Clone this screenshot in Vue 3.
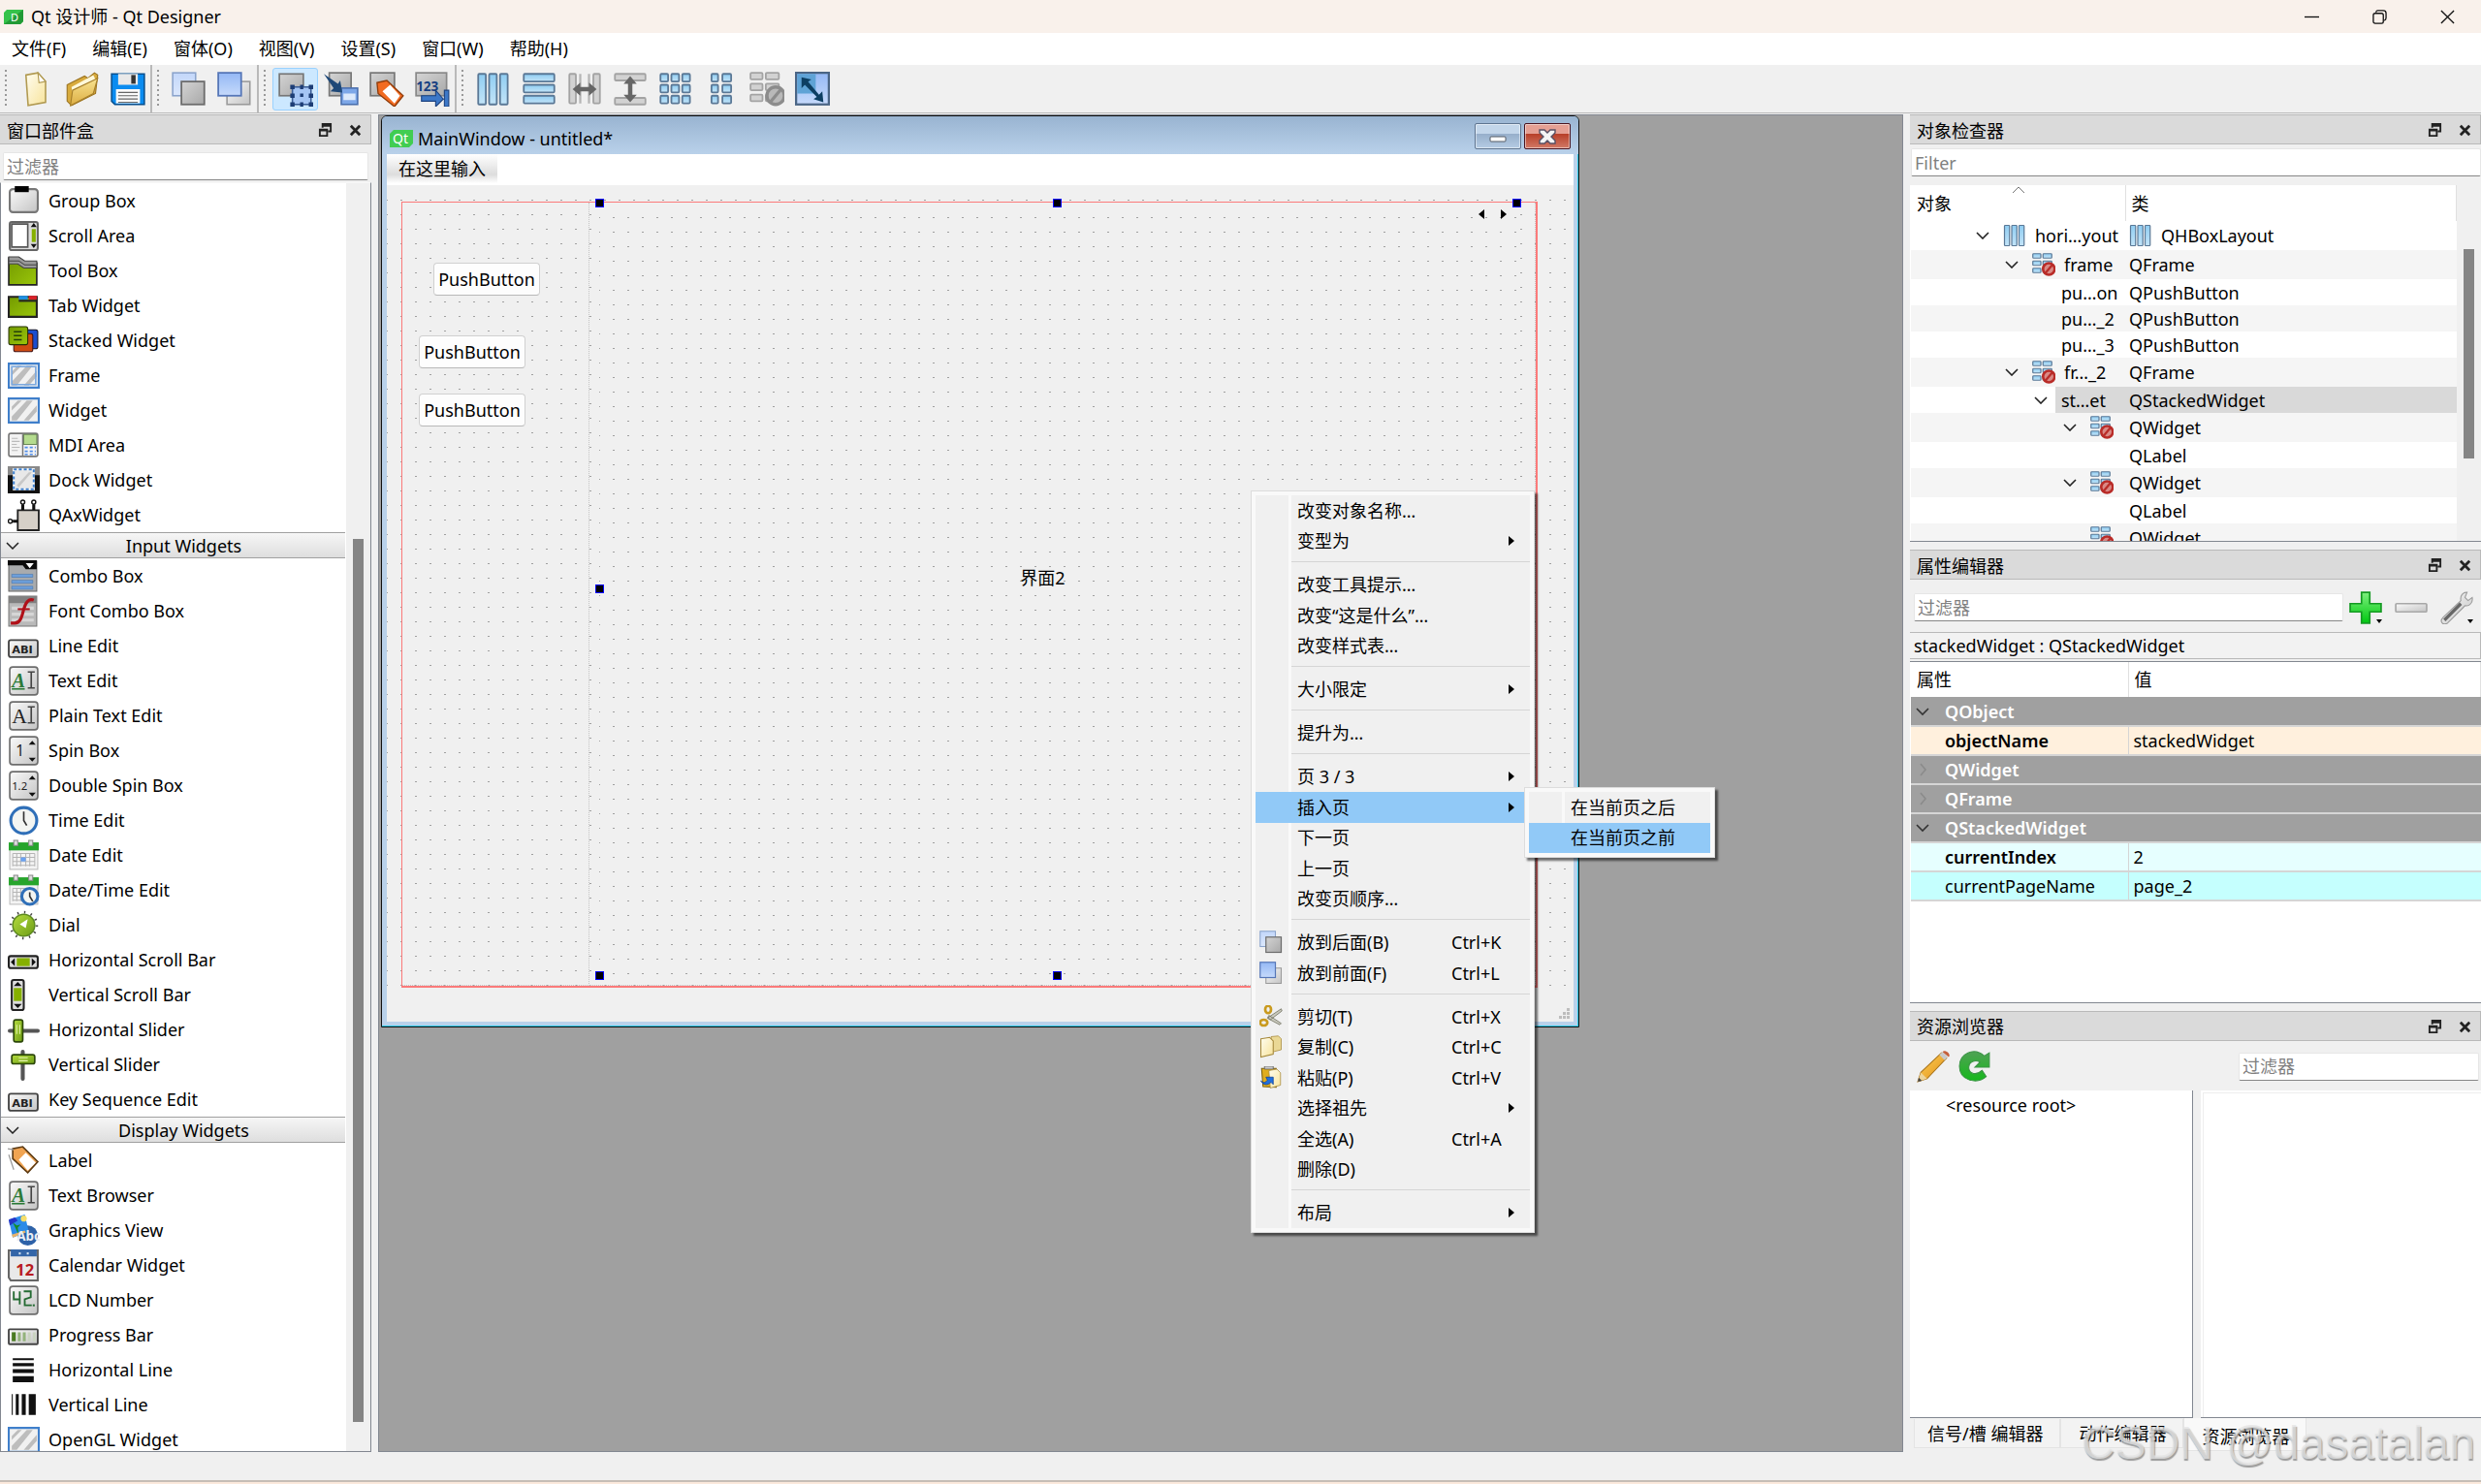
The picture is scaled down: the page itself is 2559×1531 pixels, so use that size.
<script setup>
const menus = ['文件(F)', '编辑(E)', '窗体(O)', '视图(V)', '设置(S)', '窗口(W)', '帮助(H)']

const panel = '<rect x="2" y="2" width="28" height="28" rx="3" fill="url(#silver)" stroke="#6d6d6d" stroke-width="1.6"/>'
const glass = (x, y, w, h) =>
  `<rect x="${x}" y="${y}" width="${w}" height="${h}" rx="1" fill="url(#ice)" stroke="#5a7896" stroke-width="1.6"/>`
const grey = (x, y, w, h) =>
  `<rect x="${x}" y="${y}" width="${w}" height="${h}" rx="1" fill="#d2d2d2" stroke="#a3a3a3" stroke-width="1.6"/>`
const abi = '<rect x="1" y="10" width="29" height="17" rx="2" fill="url(#silver)" stroke="#444" stroke-width="1.8"/><text x="4" y="23" font-family="DejaVu Sans" font-weight="bold" font-size="11" fill="#222">ABI</text>'
const stripes = '<path d="M4 22L19 6h6L9 26H4zM16 26L29 11v6l-8 9zM4 12l6-6h4L4 16z" fill="#bdbdbd"/>'
const calendar = '<rect x="2" y="4" width="28" height="26" fill="#f4f4f4" stroke="#bbb"/><path d="M1 3h30v8H1z" fill="#27a52c"/><path d="M6 1h4v5H6zM21 1h4v5h-4z" fill="#ddd" stroke="#888"/><path d="M5 14h22M5 18h22M5 22h22M5 26h22M5 14v13M9 14v13M13 14v13M18 14v13M22 14v13M27 14v13" stroke="#b5b5b5" stroke-width="1"/>'
const clock = (cx, cy, r) =>
  `<circle cx="${cx}" cy="${cy}" r="${r}" fill="#f3f5f2" stroke="#2f6fb8" stroke-width="3"/><path d="M${cx} ${cy - r + 4}V${cy}l3 5" fill="none" stroke="#333" stroke-width="1.6"/>`
const sendBack = '<rect x="1" y="1" width="21" height="21" fill="url(#pale)" stroke="#8ba4cc" stroke-width="1.4"/><rect x="9" y="9" width="21" height="21" fill="url(#steel)" stroke="#6c6c6c" stroke-width="1.6"/>'
const bringFront = '<rect x="9" y="9" width="21" height="21" fill="url(#silver)" stroke="#9a9a9a" stroke-width="1.4"/><rect x="1" y="1" width="21" height="21" fill="url(#blue)" stroke="#5677b8" stroke-width="1.6"/>'
const columns = glass(2, 2, 7, 28) + glass(12, 2, 7, 28) + glass(22, 2, 7, 28)

const icons = {
  file: '<path d="M6 3l11-2 7 8v19L8 31z" fill="url(#cream)" stroke="#b19a51" stroke-width="1.4"/><path d="M17 1l7 8-6 1z" fill="#fff" stroke="#b19a51"/>',
  open: '<path d="M2 12L18 4l3 2 6-5 3 2-2 17L6 31 2 27z" fill="#d8ab3d" stroke="#9c7420"/><path d="M6 14L26 3l2 4-21 13z" fill="#fff8da"/><path d="M7 17L30 6l-4 14L5 31z" fill="url(#folder)" stroke="#a67f2a"/>',
  save: '<path d="M1 2h30v28H4l-3-3z" fill="#0b8cf0" stroke="#08508f" stroke-width="1.4"/><path d="M7 2h18v10H7z" fill="#e9e9e9"/><path d="M19 3h4v8h-4z" fill="#333"/><path d="M5 16h22v13H5z" fill="#fafafa"/><path d="M7 19h18M7 22h18M7 25h18M7 28h18" stroke="#666"/>',
  sendBack, bringFront,
  editWidgets: '<rect x="1" y="2" width="22" height="20" fill="url(#steel)" stroke="#777" stroke-width="1.5"/><rect x="13" y="14" width="17" height="16" fill="#a5c5f4" stroke="#3c5e96" stroke-width="1.4"/><path d="M11 12h4v4h-4zM20 12h3v4h-3zM28 12h4v4h-4zM11 20h4v4h-4zM28 20h4v4h-4zM11 28h4v4h-4zM20 28h3v4h-3zM28 28h4v4h-4zM20 20h3v3h-3z" fill="#1d3d75"/>',
  editSignals: '<rect x="5" y="1" width="20" height="21" fill="url(#steel)" stroke="#777" stroke-width="1.5"/><rect x="16" y="15" width="15" height="15" fill="#7da7e8" stroke="#4a6fae" stroke-width="1.4"/><path d="M18 20h11v6H18z" fill="#dce9fb"/><path d="M0 2l13 9 2-3 2 11-11-1 3-3z" fill="#1f4877"/>',
  editBuddies: '<rect x="1" y="1" width="22" height="21" fill="url(#steel)" stroke="#777" stroke-width="1.5"/><path d="M7 10l9-2 15 14-8 10L8 20z" fill="#f26b21" stroke="#8f3c0b" stroke-width="1.2"/><path d="M12 18l7-6 9 10-5 7z" fill="#fff"/>',
  editTabs: '<rect x="1" y="1" width="28" height="21" fill="url(#steel)" stroke="#888" stroke-width="1.5"/><text x="1" y="18" font-family="Noto Sans" font-weight="bold" font-size="12" fill="#173f82">123</text><path d="M6 22h13v-5l7 8-7 7v-5H6zM27 17h4v15h-4z" fill="#3d78c8" stroke="#1d4380"/>',
  layoutH: columns,
  layoutV: glass(2, 2, 28, 7) + glass(2, 12, 28, 7) + glass(2, 22, 28, 7),
  splitH: grey(2, 2, 6, 27) + grey(24, 2, 6, 27) + '<path d="M12 2v27M20 2v27" stroke="#b5b5b5" stroke-width="2"/><path d="M5 16l7-6v4h8v-4l7 6-7 6v-4h-8v4z" fill="#666"/>',
  splitV: grey(2, 2, 28, 6) + grey(2, 24, 28, 6) + '<path d="M16 4l6 7h-4v10h4l-6 7-6-7h4V11h-4z" fill="#666"/>',
  grid: [2, 12, 22].map(y => [2, 12, 22].map(x => glass(x, y, 7, 7)).join('')).join(''),
  form: [2, 12, 22].map(y => glass(7, y, 6, 7) + glass(17, y, 8, 7)).join(''),
  breakOff: [1, 11, 21].map(y => grey(1, y, 11, 6) + grey(15, y, 12, 6)).join('') + '<circle cx="24" cy="22" r="8" fill="#b9b9b9" stroke="#8c8c8c" stroke-width="3"/><path d="M19 28l10-12" stroke="#8c8c8c" stroke-width="3"/>',
  adjust: '<rect x="1" y="1" width="30" height="29" fill="url(#blue)" stroke="#4a6585" stroke-width="2"/><path d="M2 2h17v18H2z" fill="#5fa3d6"/><path d="M6 5l9 2-3 2 10 12 3-3 1 10-9-3 3-2L9 12l-3 3z" fill="#0d3f63"/>',
  broken: [1, 11, 21].map(y => glass(1, y, 11, 6) + glass(15, y, 12, 6)).join('') + '<circle cx="23" cy="22" r="8" fill="#d98a86" stroke="#b92c28" stroke-width="3.4"/><path d="M18 28l10-12" stroke="#b92c28" stroke-width="3"/>',

  groupBox: '<rect x="2" y="4" width="28" height="23" rx="3" fill="url(#silver)" stroke="#777" stroke-width="2"/><path d="M7 1h14v6H7z" fill="#000"/>',
  scrollArea: '<rect x="2" y="2" width="28" height="28" rx="2" fill="#ddd" stroke="#666" stroke-width="2"/><path d="M4 4h16v23H4z" fill="#fff" stroke="#555" stroke-width="1.6"/><path d="M24 9h4v13h-4z" fill="#86b000"/><path d="M26 3l3 4h-6zM26 28l3-4h-6z" fill="#111"/>',
  toolBox: '<path d="M1 3h10l6 5h12v22H1z" fill="url(#green)" stroke="#222" stroke-width="1.6"/><path d="M1 2h10l6 4h12v7H16l-6-4H1z" fill="#9a9a9a" stroke="#444"/><path d="M1 6h10l6 4h12" fill="none" stroke="#444"/>',
  tabWidget: '<path d="M1 7h28v20H1z" fill="url(#green)" stroke="#222" stroke-width="2"/><path d="M11 6h9v4h-9z" fill="#1f8fe0"/><path d="M21 6h8v4h-8z" fill="#d9222a"/><path d="M11 11h18" stroke="#222" stroke-width="2"/>',
  stacked: '<rect x="16" y="5" width="14" height="19" rx="2" fill="#1a4ed0" stroke="#112"/><rect x="6" y="9" width="19" height="18" rx="2" fill="#cf4a12" stroke="#411"/><rect x="1" y="2" width="19" height="18" rx="2" fill="url(#green)" stroke="#253005"/><path d="M6 7h8M6 11h8M6 15h8" stroke="#25400a" stroke-width="1.4"/>',
  frame: '<path d="M1 4h30v24H1z" fill="#f1f1f1" stroke="#3f7fcb" stroke-width="2"/>' + stripes + '<path d="M4 7h24v18H4z" fill="none" stroke="#7aa8df" stroke-width="1.6"/>',
  widget: '<path d="M1 4h30v24H1z" fill="#f1f1f1" stroke="#3f7fcb" stroke-width="2"/>' + stripes,
  mdi: '<rect x="1" y="4" width="29" height="23" rx="2" fill="#f2f2f2" stroke="#777" stroke-width="1.6"/><path d="M16 5h13v10H16z" fill="#b4db8e" stroke="#6b8a55"/><path d="M15 5v22" stroke="#777" stroke-width="1.4"/><path d="M4 9h6M4 12h8M4 15h5M4 18h8M4 21h6" stroke="#bbb"/><path d="M17 18h11M17 22h11M17 25h11" stroke="#4f8ce8" stroke-width="1.6" stroke-dasharray="3 2"/>',
  dock: '<path d="M0 2h32v27H0z" fill="#111"/><path d="M0 2h32v9H0z" fill="#8a8a8a"/><rect x="6" y="5" width="20" height="20" fill="#e8e8e8" stroke="#fff" stroke-width="2"/><rect x="6" y="5" width="20" height="20" fill="none" stroke="#3f7fcb" stroke-width="2" stroke-dasharray="3 2"/><path d="M9 21L21 8h3L11 23z" fill="#c7c7c7"/>',
  qax: '<path d="M10 11h21v20H10z" fill="#d6d0c8" stroke="#222" stroke-width="1.8"/><path d="M15 5v6M26 5v6M5 22h5" stroke="#111" stroke-width="3"/><circle cx="15" cy="3" r="2" fill="#fff" stroke="#111" stroke-width="1.4"/><circle cx="26" cy="3" r="2" fill="#fff" stroke="#111" stroke-width="1.4"/><circle cx="2.5" cy="22" r="2" fill="#fff" stroke="#111" stroke-width="1.4"/>',
  combo: '<path d="M1 1h28v30H1z" fill="#a9abad" stroke="#666"/><path d="M0 0h29v9H18l-3-4H0z" fill="#0a0a0a"/><path d="M18 3h8l-4 5z" fill="#fff"/><path d="M4 14h21v3H4zM4 20h21v3H4zM4 26h21v3H4z" fill="#6d9fdb" stroke="#4a78b0" stroke-width=".6"/>',
  fontCombo: '<path d="M1 1h28v30H1z" fill="#b9b9b9" stroke="#777"/><path d="M1 1h28v7H1z" fill="#808080"/><path d="M4 13h22M4 19h22M4 25h22" stroke="#d6d6d6" stroke-width="3"/><path d="M26 5c-5-2-8 2-10 9-2 9-4 14-9 14l-4 0" fill="none" stroke="#b01018" stroke-width="3"/><path d="M10 14h12" stroke="#b01018" stroke-width="2"/>',
  abi,
  textEdit: panel + '<text x="4" y="22" font-family="Liberation Serif" font-style="italic" font-weight="bold" font-size="20" fill="#2c7a38">A</text><path d="M4 24h13" stroke="#2c7a38" stroke-width="1.6"/><path d="M20 7h7M23.500 7v16M20 23h7" stroke="#444" stroke-width="1.6"/>',
  plain: panel + '<text x="4" y="23" font-family="Liberation Serif" font-size="21" fill="#222">A</text><path d="M20 7h7M23.500 7v16M20 23h7" stroke="#444" stroke-width="1.6"/>',
  spin: panel + '<text x="8" y="21" font-family="Noto Sans" font-size="15" fill="#222">1</text><path d="M21 10l3.500-4 3.500 4zM21 23l3.500 4 3.500-4z" fill="#111"/>',
  double: panel + '<text x="4" y="20" font-family="Noto Sans" font-size="11" fill="#222">1.2</text><path d="M21 10l3.500-4 3.500 4zM21 23l3.500 4 3.500-4z" fill="#111"/>',
  time: clock(16, 16, 13),
  date: calendar + '<path d="M13 18h5v4h-5z" fill="#6aa2f2"/>',
  dateTime: calendar + clock(22, 22, 8),
  dial: '<circle cx="16" cy="16" r="13" fill="none" stroke="#444" stroke-width="2.600" stroke-dasharray="1.400 5.400"/><circle cx="16" cy="16" r="11" fill="url(#lime)" stroke="#5d8a20" stroke-width="1.4"/><path d="M20 10l-2 9-6-4z" fill="#fff"/>',
  hScroll: '<rect x="1" y="12" width="29" height="12" rx="2" fill="#ddd" stroke="#222" stroke-width="2"/><path d="M9 14h13v8H9z" fill="#86b000"/><path d="M7 14v8l-4-4zM24 14v8l4-4z" fill="#111"/>',
  vScroll: '<rect x="4" y="1" width="12" height="30" rx="2" fill="#ddd" stroke="#222" stroke-width="2"/><path d="M6 9h8v13H6z" fill="#86b000"/><path d="M6 7h8l-4-4zM6 25h8l-4 4z" fill="#111"/>',
  hSlider: '<path d="M2 17h28" stroke="#555" stroke-width="4" stroke-linecap="round"/><rect x="6" y="6" width="9" height="22" rx="2" fill="url(#lime)" stroke="#2c4708" stroke-width="1.6"/><path d="M9 11v9M12 11v9" stroke="#e5f5b0"/>',
  vSlider: '<path d="M15 3v27" stroke="#555" stroke-width="4" stroke-linecap="round"/><rect x="4" y="6" width="23" height="9" rx="2" fill="url(#lime)" stroke="#2c4708" stroke-width="1.6"/><path d="M11 9h9M11 12h9" stroke="#e5f5b0"/>',
  label: '<path d="M5 4l10-2 15 15-10 11L5 14z" fill="#f0a452" stroke="#5e3c15" stroke-width="1.6"/><path d="M11 15l7-7 10 10-8 8z" fill="#fff"/><path d="M0 4l6 1M1 10l5 15" fill="none" stroke="#999" stroke-width="1.2"/>',
  graphics: '<circle cx="20" cy="21" r="10" fill="#2e62a8"/><path d="M1 5l16-5 4 17-16 6z" fill="#2c8be8"/><path d="M1 5l6-2 3 3-8 5z" fill="#2634c8"/><circle cx="16" cy="4" r="3" fill="#f5de6a"/><path d="M5 8l4 3 4-1-3 3 1 8-3-7z" fill="#138a28"/><path d="M4 20l13-4 1 2-13 5z" fill="#e7b36a"/><text x="9" y="26" font-family="Noto Sans" font-size="13" font-weight="bold" fill="#e9eef5">Abc</text>',
  calendar: '<path d="M1 1h29v30H3l-2-3z" fill="#e9e9e9" stroke="#666" stroke-width="2"/><path d="M3 0h26v7H3z" fill="#3466a8"/><path d="M11 3h2v2h-2zM19 3h2v2h-2z" fill="#cde"/><text x="8" y="26" font-family="Noto Sans" font-weight="bold" font-size="16" fill="#b81c22">12</text>',
  lcd: panel + '<path d="M6 7v8h6M12 7v13M16 7h7v6l-6 2v6h7" fill="none" stroke="#256b33" stroke-width="1.8"/><path d="M25 20h2v2h-2z" fill="#256b33"/>',
  progress: '<rect x="1" y="10" width="29" height="15" rx="1" fill="url(#silver)" stroke="#444" stroke-width="1.8"/><path d="M4 13h4v9H4z" fill="#4a7a22"/><path d="M10 13h3v9h-3zM15 13h3v9h-3z" fill="#94b37c"/><path d="M20 13h3v9h-3zM25 13h3v9h-3z" fill="#c9d3c0"/>',
  hLine: '<path d="M5 4h21v2H5zM5 9h21v3H5zM5 15h21v4H5zM5 22h21v6H5z" fill="#111"/>',
  vLine: '<path d="M4 5h1v21H4zM8 5h3v21H8zM14 5h4v21h-4zM21 5h7v21h-7z" fill="#111"/>',

  cut: '<path d="M12 17L30 5l1 3-16 12zM13 14l17 11-2 2-17-9z" fill="#c9c9bd" stroke="#6b6b5a"/><ellipse cx="12" cy="6" rx="4" ry="5" fill="none" stroke="#c99a1e" stroke-width="3.600"/><ellipse cx="6" cy="24" rx="5" ry="4" fill="none" stroke="#c99a1e" stroke-width="3.600"/>',
  copy: '<path d="M16 2l10-1 4 4v15l-12 3z" fill="#ead895" stroke="#a5883a"/><path d="M2 5l12-2 5 5v18L2 30z" fill="url(#cream)" stroke="#a5883a" stroke-width="1.4"/>',
  paste: '<path d="M3 3h20v26l-18-1z" fill="#e0ad1e" stroke="#7a5f10" stroke-width="1.4"/><path d="M7 0h12v4H7z" fill="#ccc" stroke="#555"/><path d="M13 6l11-2 5 5v17l-14 4z" fill="url(#cream)" stroke="#a5883a"/><path d="M2 20c4 4 7 2 9-1l-2-4h10v10l-3-3c-5 5-11 4-14-2z" fill="#1f6fe0" stroke="#0f3f90"/>',
  plus: '<path d="M12 1h8v11h11v8H20v11h-8V20H1v-8h11z" fill="url(#plusGreen)" stroke="#149a22" stroke-width="1.6"/>',
  minus: '<rect x="1" y="12" width="30" height="8" rx="1" fill="url(#silver)" stroke="#a8a8a8" stroke-width="1.6"/>',
  wrench: '<path d="M2 31c-2-2-1-4 1-6L20 9c-1-5 2-8 6-8l-2 5 3 3 4-3c1 5-3 9-7 8L7 31c-2 1-4 1-5 0z" fill="url(#silver)" stroke="#999"/><path d="M4 28L20 12" stroke="#666" stroke-width="3"/>',
  pencil: '<path d="M1 31l3-9L24 3l5 5L10 28z" fill="url(#gold)" stroke="#a9741a"/><path d="M1 31l3-9 6 6z" fill="#ecd49c"/><path d="M1 31l1-4 3 3z" fill="#444"/><path d="M22 5l3-3 5 5-3 3z" fill="#c9c9c9"/><path d="M25 2c2-3 9 2 6 5z" fill="#c4603c"/>',
  reload: '<path d="M30 3v14H16l5-5c-5-3-11 0-11 5 0 7 8 8 13 3l4 6C18 34 1 30 1 16 1 4 15-3 25 6z" fill="url(#reloadGreen)" stroke="#3a9444"/>',
}

const toolGroups = [
  [['file', '新建'], ['open', '打开'], ['save', '保存']],
  [['sendBack', '放到后面'], ['bringFront', '放到前面']],
  [['editWidgets', '编辑控件'], ['editSignals', '编辑信号/槽'], ['editBuddies', '编辑伙伴'], ['editTabs', '编辑 Tab 顺序']],
  [['layoutH', '水平布局'], ['layoutV', '垂直布局'], ['splitH', '水平分裂器'], ['splitV', '垂直分裂器'], ['grid', '栅格布局'], ['form', '表单布局'], ['breakOff', '打破布局'], ['adjust', '调整大小']],
]

const widgetSections = [
  {
    title: '',
    items: [['groupBox', 'Group Box'], ['scrollArea', 'Scroll Area'], ['toolBox', 'Tool Box'], ['tabWidget', 'Tab Widget'], ['stacked', 'Stacked Widget'], ['frame', 'Frame'], ['widget', 'Widget'], ['mdi', 'MDI Area'], ['dock', 'Dock Widget'], ['qax', 'QAxWidget']],
  },
  {
    title: 'Input Widgets',
    items: [['combo', 'Combo Box'], ['fontCombo', 'Font Combo Box'], ['abi', 'Line Edit'], ['textEdit', 'Text Edit'], ['plain', 'Plain Text Edit'], ['spin', 'Spin Box'], ['double', 'Double Spin Box'], ['time', 'Time Edit'], ['date', 'Date Edit'], ['dateTime', 'Date/Time Edit'], ['dial', 'Dial'], ['hScroll', 'Horizontal Scroll Bar'], ['vScroll', 'Vertical Scroll Bar'], ['hSlider', 'Horizontal Slider'], ['vSlider', 'Vertical Slider'], ['abi', 'Key Sequence Edit']],
  },
  {
    title: 'Display Widgets',
    items: [['label', 'Label'], ['textEdit', 'Text Browser'], ['graphics', 'Graphics View'], ['calendar', 'Calendar Widget'], ['lcd', 'LCD Number'], ['progress', 'Progress Bar'], ['hLine', 'Horizontal Line'], ['vLine', 'Vertical Line'], ['widget', 'OpenGL Widget']],
  },
]

const objects = [
  { level: 0, open: true, icon: 'layoutH', name: 'hori…yout', cls: 'QHBoxLayout', clsIcon: 'layoutH', tall: true },
  { level: 1, open: true, icon: 'broken', name: 'frame', cls: 'QFrame', tall: true },
  { level: 2, name: 'pu…on', cls: 'QPushButton' },
  { level: 2, name: 'pu…_2', cls: 'QPushButton' },
  { level: 2, name: 'pu…_3', cls: 'QPushButton' },
  { level: 1, open: true, icon: 'broken', name: 'fr…_2', cls: 'QFrame', tall: true },
  { level: 2, open: true, name: 'st…et', cls: 'QStackedWidget', selected: true },
  { level: 3, open: true, icon: 'broken', name: '', cls: 'QWidget', tall: true },
  { level: 4, name: '', cls: 'QLabel' },
  { level: 3, open: true, icon: 'broken', name: '', cls: 'QWidget', tall: true },
  { level: 4, name: '', cls: 'QLabel' },
  { level: 3, icon: 'broken', name: '', cls: 'QWidget', tall: true },
]

const properties = [
  { group: 'QObject', open: true },
  { name: 'objectName', value: 'stackedWidget', bold: true, tone: 'peach' },
  { group: 'QWidget' },
  { group: 'QFrame' },
  { group: 'QStackedWidget', open: true },
  { name: 'currentIndex', value: '2', bold: true, tone: 'cyan' },
  { name: 'currentPageName', value: 'page_2', tone: 'aqua' },
]

const menuItems = [
  { text: '改变对象名称…' },
  { text: '变型为', sub: true },
  { sep: true },
  { text: '改变工具提示…' },
  { text: '改变“这是什么”…' },
  { text: '改变样式表…' },
  { sep: true },
  { text: '大小限定', sub: true },
  { sep: true },
  { text: '提升为…' },
  { sep: true },
  { text: '页 3 / 3', sub: true },
  { text: '插入页', sub: true, children: ['在当前页之后', '在当前页之前'] },
  { text: '下一页' },
  { text: '上一页' },
  { text: '改变页顺序…' },
  { sep: true },
  { text: '放到后面(B)', key: 'Ctrl+K', icon: 'sendBack' },
  { text: '放到前面(F)', key: 'Ctrl+L', icon: 'bringFront' },
  { sep: true },
  { text: '剪切(T)', key: 'Ctrl+X', icon: 'cut' },
  { text: '复制(C)', key: 'Ctrl+C', icon: 'copy' },
  { text: '粘贴(P)', key: 'Ctrl+V', icon: 'paste' },
  { text: '选择祖先', sub: true },
  { text: '全选(A)', key: 'Ctrl+A' },
  { text: '删除(D)' },
  { sep: true },
  { text: '布局', sub: true },
]

const handles = ['tl', 'tm', 'tr', 'ml', 'bl', 'bm']
const floatIcon = '<path d="M5 5V1h9v8h-3" fill="none" stroke="#222" stroke-width="2"/><path d="M5 3h9" stroke="#222" stroke-width="2"/><path d="M2 7h8v7H2zM2 8h8" fill="none" stroke="#222" stroke-width="2"/>'
const closeIcon = '<path d="M3 3l10 10M13 3L3 13" stroke="#222" stroke-width="3"/>'
</script>

<template>
  <div class="app">
    <svg class="defs" width="0" height="0" aria-hidden="true">
      <defs>
        <linearGradient id="silver" x1="0" y1="0" x2="1" y2="1"><stop offset="0" stop-color="#fafafa" /><stop offset="1" stop-color="#c4c4c4" /></linearGradient>
        <linearGradient id="steel" x1="0" y1="0" x2="1" y2="1"><stop offset="0" stop-color="#d4d4d4" /><stop offset="1" stop-color="#a8a8a8" /></linearGradient>
        <linearGradient id="ice" x1="0" y1="0" x2="0" y2="1"><stop offset="0" stop-color="#8fcdf2" /><stop offset="1" stop-color="#c3e4f8" /></linearGradient>
        <linearGradient id="pale" x1="0" y1="0" x2="0" y2="1"><stop offset="0" stop-color="#c3d7fa" /><stop offset="1" stop-color="#dbe7fc" /></linearGradient>
        <linearGradient id="blue" x1="0" y1="0" x2="0" y2="1"><stop offset="0" stop-color="#94b8f5" /><stop offset="1" stop-color="#c6dafb" /></linearGradient>
        <linearGradient id="cream" x1="0" y1="0" x2="1" y2="1"><stop offset="0" stop-color="#fffdf0" /><stop offset="1" stop-color="#f7e39b" /></linearGradient>
        <linearGradient id="folder" x1="0" y1="0" x2="0" y2="1"><stop offset="0" stop-color="#f9e391" /><stop offset="1" stop-color="#dcae43" /></linearGradient>
        <linearGradient id="green" x1="0" y1="0" x2="1" y2="1"><stop offset="0" stop-color="#739a00" /><stop offset="1" stop-color="#9ac60a" /></linearGradient>
        <linearGradient id="lime" x1="0" y1="0" x2="1" y2="1"><stop offset="0" stop-color="#b5dd3e" /><stop offset="1" stop-color="#6d9c16" /></linearGradient>
        <linearGradient id="gold" x1="0" y1="0" x2="1" y2="1"><stop offset="0" stop-color="#ffd257" /><stop offset="1" stop-color="#e08f18" /></linearGradient>
        <linearGradient id="plusGreen" x1="0" y1="0" x2="0" y2="1"><stop offset="0" stop-color="#7df07e" /><stop offset="1" stop-color="#00c810" /></linearGradient>
        <linearGradient id="reloadGreen" x1="0" y1="0" x2="0" y2="1"><stop offset="0" stop-color="#4fa254" /><stop offset="1" stop-color="#16b81c" /></linearGradient>
      </defs>
    </svg>

    <header class="titlebar">
      <svg class="app-logo" viewBox="0 0 20 15"><path d="M3 0h17v12l-3 3H0V3z" fill="#35c24a" /><path d="M0 15L20 0v12l-3 3z" fill="#229a36" /><text x="7" y="12" font-family="Noto Sans" font-size="11" fill="#fff">D</text></svg>
      <h1>Qt 设计师 - Qt Designer</h1>
      <div class="window-buttons">
        <button aria-label="最小化"><svg viewBox="0 0 16 16"><path d="M0 8h16" /></svg></button>
        <button aria-label="还原"><svg viewBox="0 0 16 16"><rect x="1" y="4" width="11" height="11" rx="2" /><path d="M4 3q0-2 2-2h6q3 0 3 3v5q0 2-2 3" /></svg></button>
        <button aria-label="关闭"><svg viewBox="0 0 16 16"><path d="M1 1l14 14M15 1L1 15" /></svg></button>
      </div>
    </header>

    <nav class="menubar">
      <button v-for="m in menus" :key="m">{{ m }}</button>
    </nav>

    <div class="toolbars">
      <div v-for="(group, i) in toolGroups" :key="i" class="toolbar">
        <span class="grip"></span>
        <button v-for="[icon, label] in group" :key="icon" class="tool" :class="{ active: icon === 'editWidgets' }" :aria-label="label">
          <svg viewBox="0 0 32 32" v-html="icons[icon]"></svg>
        </button>
      </div>
    </div>

    <main class="body">
      <aside class="widget-box">
        <div class="dock-title">
          <h2>窗口部件盒</h2>
          <button aria-label="浮动"><svg viewBox="0 0 16 16" v-html="floatIcon"></svg></button>
          <button aria-label="关闭"><svg viewBox="0 0 16 16" v-html="closeIcon"></svg></button>
        </div>
        <input class="filter box-filter" type="text" placeholder="过滤器" aria-label="过滤器" />
        <div class="widget-list">
          <div class="widget-items">
            <section v-for="s in widgetSections" :key="s.title">
              <button v-if="s.title" class="category">
                <svg viewBox="0 0 14 8"><path d="M1 1l6 6 6-6" /></svg>
                <span>{{ s.title }}</span>
              </button>
              <ul>
                <li v-for="[icon, label] in s.items" :key="label">
                  <svg viewBox="0 0 32 32" v-html="icons[icon]"></svg>{{ label }}
                </li>
              </ul>
            </section>
          </div>
          <div class="scroll-lane"><div class="thumb box-thumb"></div></div>
        </div>
      </aside>

      <section class="workspace">
        <article class="form-window">
          <header class="form-title">
            <svg class="qt-logo" viewBox="0 0 24 18"><path d="M4 0h20v14l-4 4H0V4z" fill="#41cd52" /><text x="3" y="14" font-family="Noto Sans" font-size="14" fill="#fff">Qt</text></svg>
            <h2>MainWindow - untitled*</h2>
            <button class="win-min" aria-label="最小化"><svg viewBox="0 0 20 16"><rect x="2" y="8" width="16" height="5" rx="1" fill="#fdfdfd" stroke="#555c66" /></svg></button>
            <button class="win-close" aria-label="关闭"><svg viewBox="0 0 20 16"><path d="M2 1h5l3 3 3-3h5v3l-4 4 4 4v3h-5l-3-3-3 3H2v-3l4-4-4-4z" fill="#f4f4f4" stroke="#585064" stroke-width="1.400" /></svg></button>
          </header>
          <div class="form-menu"><button>在这里输入</button></div>
          <div class="canvas">
            <div class="h-layout">
              <div class="frame-left">
                <button class="push first">PushButton</button>
                <button class="push second">PushButton</button>
                <button class="push third">PushButton</button>
              </div>
              <div class="frame-right">
                <div class="stack">
                  <span class="page-label">界面2</span>
                  <button class="page-arrow prev" aria-label="上一页"></button>
                  <button class="page-arrow next" aria-label="下一页"></button>
                  <i v-for="h in handles" :key="h" class="handle" :class="h"></i>
                </div>
              </div>
            </div>
          </div>
          <div class="form-status">
            <svg viewBox="0 0 12 12"><path d="M9 0h3v3H9zM5 4h3v3H5zM9 4h3v3H9zM1 8h3v3H1zM5 8h3v3H5zM9 8h3v3H9z" fill="#bdbdbd" /></svg>
          </div>
        </article>

        <div class="menu context" role="menu">
          <template v-for="(m, i) in menuItems" :key="i">
            <hr v-if="m.sep" />
            <div v-else class="menu-row" :class="{ hot: m.children }">
              <button class="menu-item" role="menuitem">
                <span class="menu-icon"><svg v-if="m.icon" viewBox="0 0 32 32" v-html="icons[m.icon]"></svg></span>
                <span class="menu-text">{{ m.text }}</span>
                <span v-if="m.key" class="menu-key">{{ m.key }}</span>
                <svg v-if="m.sub" class="menu-arrow" viewBox="0 0 6 10"><path d="M0 0l6 5-6 5z" /></svg>
              </button>
              <div v-if="m.children" class="menu submenu" role="menu">
                <div v-for="(c, j) in m.children" :key="c" class="menu-row" :class="{ hot: j === 1 }">
                  <button class="menu-item" role="menuitem">
                    <span class="menu-icon"></span><span class="menu-text">{{ c }}</span>
                  </button>
                </div>
              </div>
            </div>
          </template>
        </div>
      </section>

      <aside class="right-docks">
        <section class="dock inspector">
          <div class="dock-title">
            <h2>对象检查器</h2>
            <button aria-label="浮动"><svg viewBox="0 0 16 16" v-html="floatIcon"></svg></button>
            <button aria-label="关闭"><svg viewBox="0 0 16 16" v-html="closeIcon"></svg></button>
          </div>
          <input class="filter" type="text" placeholder="Filter" aria-label="Filter" />
          <div class="tree">
            <table>
              <thead>
                <tr>
                  <th class="name-col">对象<svg class="sort" viewBox="0 0 12 7"><path d="M0 7l6-6 6 6" /></svg></th>
                  <th>类</th>
                </tr>
              </thead>
              <tbody>
                <tr v-for="(o, i) in objects" :key="i" :class="{ tall: o.tall }">
                  <td>
                    <div class="node">
                      <span v-for="n in o.level" :key="n" class="indent"></span>
                      <span class="twist"><svg v-if="o.open" viewBox="0 0 14 8"><path d="M1 1l6 6 6-6" /></svg></span>
                      <span class="node-name" :class="{ selected: o.selected }">
                        <svg v-if="o.icon" viewBox="0 0 32 32" v-html="icons[o.icon]"></svg>{{ o.name }}
                      </span>
                    </div>
                  </td>
                  <td :class="{ selected: o.selected }">
                    <div class="node cls"><svg v-if="o.clsIcon" viewBox="0 0 32 32" v-html="icons[o.clsIcon]"></svg>{{ o.cls }}</div>
                  </td>
                </tr>
              </tbody>
            </table>
            <div class="scroll-lane"><div class="thumb tree-thumb"></div></div>
          </div>
        </section>

        <section class="dock editor">
          <div class="dock-title">
            <h2>属性编辑器</h2>
            <button aria-label="浮动"><svg viewBox="0 0 16 16" v-html="floatIcon"></svg></button>
            <button aria-label="关闭"><svg viewBox="0 0 16 16" v-html="closeIcon"></svg></button>
          </div>
          <div class="editor-tools">
            <input class="filter" type="text" placeholder="过滤器" aria-label="过滤属性" />
            <button class="drop" aria-label="添加"><svg viewBox="0 0 32 32" v-html="icons.plus"></svg></button>
            <button aria-label="移除"><svg viewBox="0 0 32 32" v-html="icons.minus"></svg></button>
            <button class="drop" aria-label="设置"><svg viewBox="0 0 32 32" v-html="icons.wrench"></svg></button>
          </div>
          <p class="object-label">stackedWidget : QStackedWidget</p>
          <div class="props">
            <table>
              <thead>
                <tr><th class="prop-col">属性</th><th>值</th></tr>
              </thead>
              <tbody>
                <tr v-for="p in properties" :key="p.group || p.name" :class="p.group ? 'group' : p.tone">
                  <template v-if="p.group">
                    <td colspan="2">
                      <svg v-if="p.open" viewBox="0 0 14 14"><path d="M1 4l6 6 6-6" stroke="#333" /></svg>
                      <svg v-else viewBox="0 0 14 14"><path d="M5 1l5 6-5 6" stroke="#8b8b8b" /></svg>
                      {{ p.group }}
                    </td>
                  </template>
                  <template v-else>
                    <td class="prop-name" :class="{ bold: p.bold }">{{ p.name }}</td>
                    <td class="prop-value">{{ p.value }}</td>
                  </template>
                </tr>
              </tbody>
            </table>
          </div>
        </section>

        <section class="dock resources">
          <div class="dock-title">
            <h2>资源浏览器</h2>
            <button aria-label="浮动"><svg viewBox="0 0 16 16" v-html="floatIcon"></svg></button>
            <button aria-label="关闭"><svg viewBox="0 0 16 16" v-html="closeIcon"></svg></button>
          </div>
          <div class="resource-tools">
            <button aria-label="编辑资源"><svg viewBox="0 0 32 32" v-html="icons.pencil"></svg></button>
            <button aria-label="重新加载"><svg viewBox="0 0 32 32" v-html="icons.reload"></svg></button>
            <input class="filter" type="text" placeholder="过滤器" aria-label="过滤资源" />
          </div>
          <div class="resource-panes">
            <div class="pane root-pane">&lt;resource root&gt;</div>
            <div class="pane file-pane"></div>
          </div>
          <div class="tabs">
            <button>信号/槽 编辑器</button>
            <button>动作编辑器</button>
            <button class="current">资源浏览器</button>
          </div>
        </section>
      </aside>
    </main>

    <footer class="statusbar"></footer>
    <div class="watermark">CSDN @dasatalan</div>
  </div>
</template>

<style>
body {
  margin: 0;
}
</style>

<style scoped>
.app {
  position: relative;
  display: flex;
  flex-direction: column;
  height: 100vh;
  overflow: hidden;
  background: #f0f0f0;
  color: #000;
  font: 18px/24px 'Noto Sans', 'Noto Sans CJK SC', sans-serif;
}
.app * {
  box-sizing: border-box;
}
.defs {
  position: absolute;
}
button,
input {
  font: inherit;
  color: inherit;
  border: 0;
  padding: 0;
  background: none;
}
h1,
h2,
p,
ul {
  margin: 0;
  padding: 0;
  font-size: 18px;
  font-weight: 400;
  list-style: none;
}
svg {
  display: block;
  flex: none;
}

.titlebar {
  flex: none;
  display: flex;
  align-items: center;
  height: 34px;
  padding-left: 4px;
  background: #f9f1eb;
}
.titlebar h1 {
  flex: 1;
  margin-left: 8px;
}
.app-logo {
  width: 20px;
  height: 15px;
}
.window-buttons {
  display: flex;
}
.window-buttons button {
  display: flex;
  align-items: center;
  justify-content: center;
  width: 70px;
  height: 34px;
}
.window-buttons svg {
  width: 15px;
  height: 15px;
  fill: none;
  stroke: #111;
  stroke-width: 1.4;
}

.menubar {
  flex: none;
  display: flex;
  gap: 3px;
  height: 33px;
  padding-bottom: 1px;
  background: #fff;
}
.menubar button {
  padding: 0 12px;
}

.toolbars {
  flex: none;
  display: flex;
  height: 50px;
  border-bottom: 1px solid #b9b9b9;
}
.toolbar {
  display: flex;
  align-items: center;
  padding-left: 5px;
  border-right: 2px solid #b9b9b9;
}
.toolbar:last-child {
  border-right: 0;
}
.grip {
  width: 9px;
  height: 40px;
  background: linear-gradient(90deg, transparent 2px, #f0f0f0 2px), repeating-linear-gradient(180deg, #999 0 2px, #f0f0f0 2px 5px);
}
.tool {
  display: flex;
  align-items: center;
  justify-content: center;
  width: 47px;
  height: 44px;
}
.tool.active {
  background: #cce8ff;
  border: 1px solid #99d1ff;
  border-radius: 3px;
}
.tool svg {
  width: 36px;
  height: 36px;
}

.body {
  flex: 1;
  min-height: 0;
  display: flex;
  gap: 7px;
  padding-top: 1px;
}
.widget-box {
  flex: none;
  width: 383px;
  display: flex;
  flex-direction: column;
}
.dock-title {
  flex: none;
  display: flex;
  align-items: center;
  height: 31px;
  padding: 2px 7px 0 7px;
  background: #dadada;
  border: 1px solid #b9b9b9;
  border-left: 0;
}
.dock-title h2 {
  flex: 1;
}
.dock-title button {
  width: 16px;
  margin-left: 15px;
}
.dock-title svg {
  width: 15px;
  height: 15px;
}
.filter {
  flex: none;
  height: 29px;
  padding: 0 3px;
  background: #fff;
  border: 1px solid #e6e6e6;
  border-bottom: 1px solid #868686;
  border-radius: 2px;
}
.filter::placeholder {
  color: #808080;
  opacity: 1;
}
.box-filter {
  margin: 8px 3px 2px 3px;
}
.widget-list {
  flex: 1;
  min-height: 0;
  display: flex;
  background: #fff;
  border: 1px solid #828790;
  border-top-color: #f8f8f8;
}
.widget-items {
  flex: 1;
  overflow: hidden;
}
.scroll-lane {
  flex: none;
  width: 25px;
  padding-left: 7px;
  background: #f0f0f0;
}
.thumb {
  width: 11px;
  background: #858585;
}
.box-thumb {
  height: 911px;
  margin-top: 367px;
}
.widget-items li {
  display: flex;
  align-items: center;
  height: 36px;
  padding-left: 7px;
  gap: 9px;
}
.widget-items li svg {
  width: 33px;
  height: 33px;
}
.category {
  display: flex;
  align-items: center;
  width: 355px;
  height: 27px;
  background: linear-gradient(#f6f6f6, #dedede);
  border-top: 1px solid #a0a0a0;
  border-bottom: 1px solid #a0a0a0;
}
.category svg {
  width: 14px;
  height: 8px;
  margin-left: 5px;
  fill: none;
  stroke: #222;
  stroke-width: 1.5;
}
.category span {
  flex: 1;
  padding-left: 3px;
}

.workspace {
  position: relative;
  flex: 1;
  overflow: hidden;
  background: #a0a0a0;
  border: 1px solid #828790;
}
.form-window {
  position: absolute;
  left: 2px;
  top: 0;
  width: 1236px;
  padding: 0 5px 5px;
  background: #b9d1ea;
  border: 1px solid #111;
  border-radius: 6px 6px 0 0;
  box-shadow: inset -1px -1px #2bc9e6;
}
.form-title {
  display: flex;
  align-items: center;
  height: 39px;
  margin: 0 -5px;
  padding: 6px 8px 0 8px;
  background: linear-gradient(#99b4d1, #b9d1ea);
  border-radius: 5px 5px 0 0;
}
.form-title h2 {
  flex: 1;
  margin-left: 5px;
}
.qt-logo {
  width: 24px;
  height: 18px;
}
.form-title button {
  display: flex;
  align-items: center;
  justify-content: center;
  width: 48px;
  height: 27px;
  margin: 0 0 4px 3px;
  border: 1px solid #5f7590;
  border-radius: 2px;
  box-shadow: inset 0 0 0 1px rgba(255, 255, 255, 0.5);
}
.form-title svg {
  height: 16px;
}
.form-title .qt-logo {
  height: 18px;
}
.win-min {
  background: linear-gradient(#c3d6ea 40%, #97afcb 42%, #b5cce4);
}
.form-title .win-close {
  border-color: #4a1420;
  background: linear-gradient(#e5a094 40%, #b8402a 42%, #d27a66);
}
.form-menu {
  height: 32px;
  background: #fff;
}
.form-menu button {
  height: 30px;
  padding: 0 12px;
  background: linear-gradient(#fff, #ddd 70%, #fff);
}
.canvas {
  height: 828px;
  padding: 17px 37px 0 15px;
  background: linear-gradient(#f0f0f0, #f0f0f0) 0 0 / 100% 15px no-repeat,
    repeating-linear-gradient(90deg, transparent 0 1px, #f0f0f0 1px 14px, transparent 14px 15px),
    repeating-linear-gradient(180deg, #a0a0a0 0 1px, #f0f0f0 1px 15px);
}
.h-layout {
  display: flex;
  height: 811px;
  border: 1px solid #fb7a7a;
  border-width: 1px 2px 2px 1px;
}
.frame-left {
  position: relative;
  width: 193px;
  border-right: 1px dotted #c4c4c4;
  border-bottom: 1px dotted #c4c4c4;
}
.push {
  position: absolute;
  width: 110px;
  height: 34px;
  background: #fdfdfd;
  border: 1px solid #d0d0d0;
  border-bottom-color: #b8b8b8;
  border-radius: 4px;
}
.first {
  left: 32px;
  top: 62px;
}
.second {
  left: 17px;
  top: 137px;
}
.third {
  left: 17px;
  top: 197px;
}
.frame-right {
  flex: 1;
  padding: 1px 18px 10px 10px;
  border-right: 1px dotted #c4c4c4;
  border-bottom: 1px dotted #c4c4c4;
}
.stack {
  position: relative;
  display: flex;
  align-items: center;
  justify-content: center;
  height: 100%;
  background: repeating-linear-gradient(90deg, transparent 0 1px, #f0f0f0 1px 14px, transparent 14px 15px),
    repeating-linear-gradient(180deg, #f0f0f0 0 14px, #a0a0a0 14px 15px);
}
.page-label {
  padding: 0 32px 24px 0;
}
.page-arrow {
  position: absolute;
  top: 6px;
  border: 5px solid transparent;
}
.prev {
  right: 34px;
  border-right: 6px solid #000;
  border-left-width: 0;
}
.next {
  right: 11px;
  border-left: 6px solid #000;
  border-right-width: 0;
}
.handle {
  position: absolute;
  width: 9px;
  height: 9px;
  background: #000;
  border: 1px solid #00f;
}
.tl {
  left: -4px;
  top: -5px;
}
.tm {
  left: calc(50% - 6px);
  top: -5px;
}
.tr {
  right: -4px;
  top: -5px;
}
.ml {
  left: -4px;
  top: calc(50% - 5px);
}
.bl {
  left: -4px;
  bottom: -5px;
}
.bm {
  left: calc(50% - 6px);
  bottom: -5px;
}
.form-status {
  display: flex;
  align-items: flex-end;
  justify-content: flex-end;
  height: 35px;
  padding: 0 4px 2px 0;
  background: #f0f0f0;
}
.form-status svg {
  width: 12px;
  height: 12px;
}

.menu {
  position: absolute;
  display: flex;
  flex-direction: column;
  padding: 4px;
  background: linear-gradient(90deg, #f0f0f0 34px, #f9f9f9 34px 37px, #f0f0f0 37px) content-box, #f9f9f9;
  border: 1px solid #dcdcdc;
  box-shadow: 3px 3px 2px rgba(0, 0, 0, 0.55);
}
.context {
  left: 899px;
  top: 387px;
  width: 293px;
  height: 766px;
}
.submenu {
  left: 277px;
  top: -5px;
  width: 197px;
  height: 73px;
  z-index: 1;
}
.menu-row {
  position: relative;
  flex: 21 1 0;
  min-height: 0;
}
.menu-row.hot > .menu-item {
  background: #91c9f7;
}
.menu hr {
  flex: 9 1 0;
  align-self: stretch;
  margin: 0 0 0 37px;
  border: 0;
  background: linear-gradient(#d5d5d5, #d5d5d5) 0 5px / 100% 1px no-repeat;
}
.menu-item {
  display: flex;
  align-items: center;
  width: 100%;
  height: 100%;
  text-align: left;
}
.menu-icon {
  width: 43px;
  padding-left: 4px;
}
.menu-icon svg {
  width: 24px;
  height: 24px;
}
.menu-text {
  flex: 1;
  white-space: nowrap;
}
.menu-key {
  width: 81px;
}
.menu-arrow {
  width: 6px;
  height: 10px;
  margin-right: 16px;
}

.right-docks {
  flex: none;
  width: 589px;
  display: flex;
  flex-direction: column;
  gap: 8px;
}
.dock {
  min-height: 0;
  display: flex;
  flex-direction: column;
}
.inspector {
  flex: 441 1 0;
}
.editor {
  flex: 467 1 0;
}
.resources {
  flex: 455 1 0;
}
.inspector .filter {
  margin: 4px 0 9px 1px;
}
.tree {
  flex: 1;
  min-height: 0;
  display: flex;
  align-items: stretch;
  overflow: hidden;
  background: #fff;
  border-bottom: 1px solid #828790;
  padding-left: 1px;
}
table {
  flex: 1;
  align-self: flex-start;
  width: 100%;
  table-layout: fixed;
  border-collapse: collapse;
}
th {
  position: relative;
  height: 37px;
  padding: 0 0 0 6px;
  font-weight: 400;
  text-align: left;
  border-right: 1px solid #e0e0e0;
}
.name-col {
  width: 221px;
}
.sort {
  position: absolute;
  left: 105px;
  top: 1px;
  width: 12px;
  height: 7px;
  fill: none;
  stroke: #777;
}
td {
  padding: 0;
}
.tree tbody tr:nth-child(even) {
  background: #f5f5f5;
}
.node {
  display: flex;
  align-items: center;
  height: 27px;
  white-space: nowrap;
}
.tall .node {
  height: 30px;
}
.indent {
  flex: none;
  width: 30px;
}
.twist {
  flex: none;
  width: 30px;
  margin-left: 59px;
}
.twist svg {
  width: 14px;
  height: 8px;
  margin-left: 8px;
  fill: none;
  stroke: #222;
  stroke-width: 1.6;
}
.node-name {
  flex: 1;
  display: flex;
  align-items: center;
  gap: 9px;
  height: 100%;
  padding-left: 6px;
}
.node-name svg,
.cls svg {
  width: 24px;
  height: 24px;
}
.cls {
  gap: 9px;
  padding-left: 4px;
}
.selected {
  background: #d9d9d9;
}
.tree-thumb {
  height: 216px;
  margin-top: 66px;
}

.editor-tools {
  flex: none;
  display: flex;
  align-items: center;
  height: 54px;
  padding: 3px 8px 0 4px;
}
.editor-tools .filter {
  flex: 1;
  margin-right: 6px;
}
.editor-tools button {
  position: relative;
  width: 34px;
  margin-right: 13px;
}
.editor-tools button:last-child {
  margin-right: 0;
}
.editor-tools svg {
  width: 34px;
  height: 34px;
}
.drop::after {
  content: '';
  position: absolute;
  right: 0;
  bottom: 1px;
  border: 3px solid transparent;
  border-top: 4px solid #000;
  border-bottom: 0;
}
.object-label {
  flex: none;
  height: 28px;
  padding-left: 4px;
  line-height: 26px;
  background: #f2f2f2;
  border: 1px solid #b9b9b9;
  border-left: 0;
}
.props {
  flex: 1;
  min-height: 0;
  margin-top: 2px;
  padding-left: 1px;
  background: #fff;
  border-top: 1px solid #828790;
  border-bottom: 1px solid #828790;
}
.prop-col {
  width: 224px;
}
.props th {
  height: 36px;
}
.props td {
  height: 30px;
  line-height: 28px;
  border-bottom: 2px solid #d5d5d5;
}
.group td {
  background: #a0a0a0;
  color: #fff;
  font-weight: 600;
}
.group svg {
  float: left;
  width: 14px;
  height: 14px;
  margin: 7px 16px 0 5px;
  fill: none;
  stroke-width: 1.6;
}
td.prop-name {
  padding-left: 35px;
  border-right: 1px solid #d5d5d5;
}
.prop-value {
  padding-left: 5px;
}
.bold {
  font-weight: 600;
}
.peach {
  background: #fff0dd;
}
.cyan {
  background: #e6ffff;
}
.aqua {
  background: #c5fffe;
}

.resource-tools {
  flex: none;
  display: flex;
  align-items: center;
  gap: 9px;
  height: 51px;
  padding: 2px 2px 0 7px;
}
.resource-tools svg {
  width: 34px;
  height: 34px;
}
.resource-tools .filter {
  width: 248px;
  margin-left: auto;
}
.resource-panes {
  flex: 1;
  min-height: 0;
  display: flex;
  gap: 8px;
}
.pane {
  background: #fff;
  border-bottom: 1px solid #828790;
}
.root-pane {
  width: 292px;
  padding: 3px 0 0 37px;
  border-right: 1px solid #828790;
}
.file-pane {
  flex: 1;
  box-shadow: inset 2px 2px #fff, inset 3px 3px #eee;
}
.tabs {
  flex: none;
  display: flex;
  height: 35px;
  padding: 0 4px 0;
}
.tabs button {
  height: 30px;
  margin-top: 1px;
  padding: 0 17px 0 13px;
  background: #f3f3f3;
  border: 1px solid #e4e4e4;
  border-top: 0;
}
.tabs button:nth-child(2) {
  padding-left: 18px;
}
.tabs .current {
  height: 34px;
  margin-top: 0;
  padding: 4px 17px 0 18px;
  background: #f9f9f9;
}

.statusbar {
  flex: none;
  height: 33px;
  border-bottom: 2px solid #fbe9dc;
  box-shadow: inset 0 -2px #c5bdb6;
}
.watermark {
  position: absolute;
  right: 6px;
  bottom: 14px;
  font: 48px/56px 'Liberation Sans', sans-serif;
  color: rgba(228, 228, 228, 0.75);
  text-shadow: 1px 2px 1px rgba(110, 110, 110, 0.65);
}
</style>
